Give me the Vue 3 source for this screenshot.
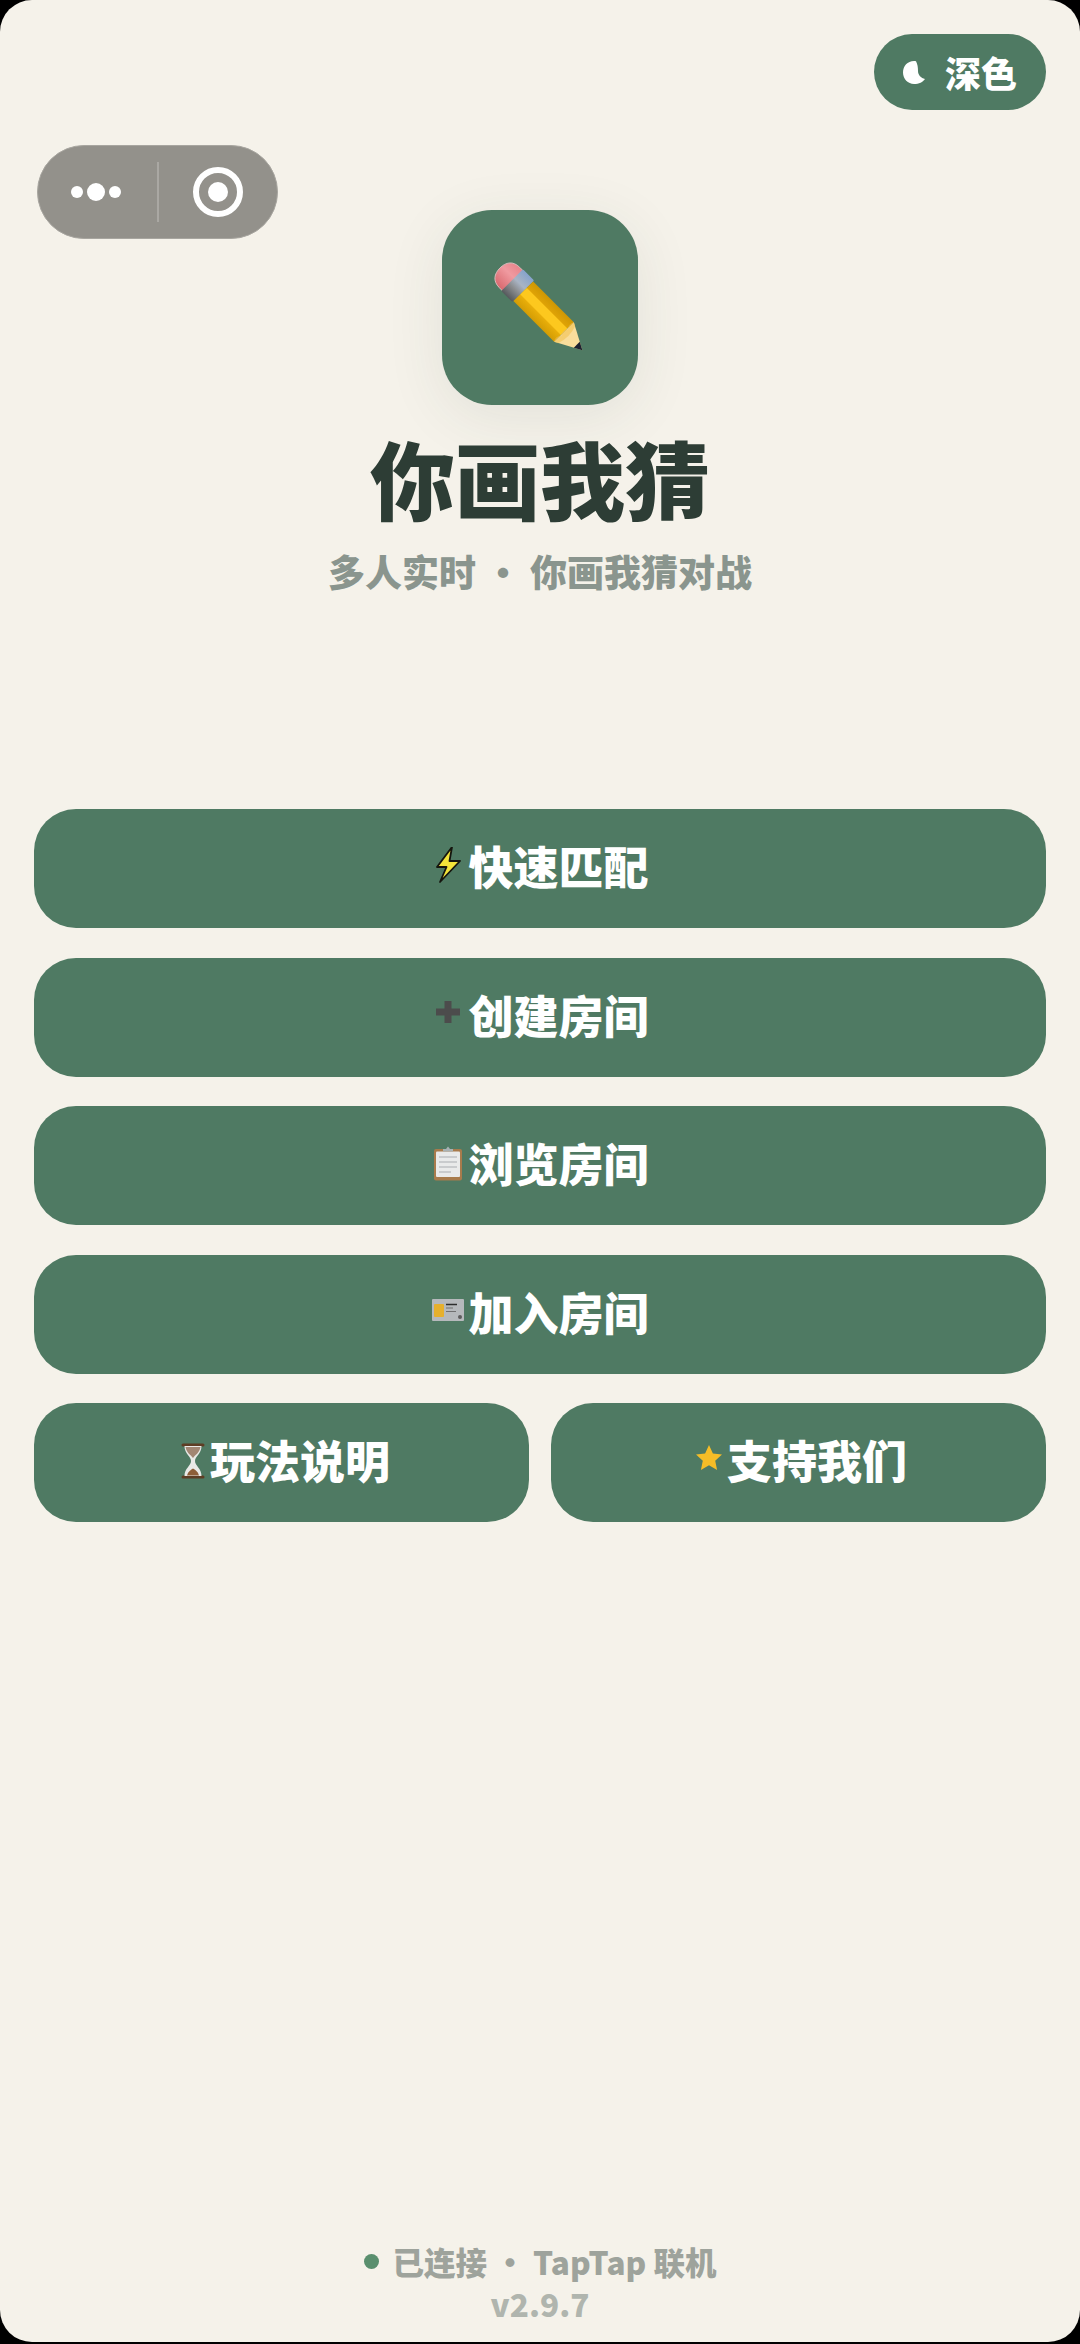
<template>
  <div class="page">
    <button class="theme">
      <svg class="moon" viewBox="0 0 22 23"><path d="M11 0C4.500 0 0 5 0 11.500S5 23 11 23c5 0 9-2 11-5-4-1-7-4-7-8 0-4-.5-7-2-9.800-.7-.1-1.300-.2-2-.2z" fill="#fff"/></svg>
      <span>深色</span>
    </button>
    <div class="capsule">
      <div class="dots"><i class="sm"></i><i class="lg"></i><i class="sm"></i></div>
      <div class="divider"></div>
      <div class="target"><i></i></div>
    </div>

    <header class="hero">
      <div class="logo">
        <svg class="pencil" viewBox="0 0 140 140">
          <defs>
            <linearGradient id="body" x1="0" y1="0" x2="1" y2="0">
              <stop offset="0" stop-color="#d39c04"/><stop offset=".33" stop-color="#e8ae0a"/><stop offset=".36" stop-color="#fdc81e"/><stop offset=".66" stop-color="#fdc81e"/><stop offset=".69" stop-color="#dfa306"/><stop offset="1" stop-color="#cf9703"/>
            </linearGradient>
            <linearGradient id="ferr" x1="0" y1="0" x2="1" y2="0">
              <stop offset="0" stop-color="#55595c"/><stop offset=".35" stop-color="#8b8d90"/><stop offset=".6" stop-color="#a9b4c4"/><stop offset="1" stop-color="#86a3cc"/>
            </linearGradient>
            <linearGradient id="eraser" x1="0" y1="0" x2="1" y2="0">
              <stop offset="0" stop-color="#d9696f"/><stop offset=".6" stop-color="#f09aa0"/><stop offset="1" stop-color="#e9858c"/>
            </linearGradient>
          </defs>
          <g transform="rotate(-45 70 70)">
            <path d="M54.500 28V22C54.500 12 61 7.500 70 7.500S85.500 12 85.500 22V28z" fill="url(#eraser)" stroke="#d8bcbc" stroke-width="1"/>
            <rect x="53.500" y="26" width="33" height="17" rx="1.500" fill="url(#ferr)"/>
            <rect x="55" y="43" width="30" height="62" fill="url(#body)"/>
            <path d="M55 105 70 133 85 105z" fill="#f9dd9c"/>
            <path d="M55 105q5-4 10 1q5-5 10 0q5-4 10-1l-2 4q-13 5-26 0z" fill="#f3bf4d" opacity=".55"/>
            <path d="M65.500 124.500h9L70 133z" fill="#1c2130"/>
          </g>
        </svg>
      </div>
      <h1>你画我猜</h1>
      <p>多人实时 · 你画我猜对战</p>
    </header>

    <main class="actions">
      <button class="btn">
        <svg class="ico" viewBox="0 0 33 40"><path d="M21 0 6 20h9.500L9 35 29 14H18.500z" fill="#f3e43a" stroke="#15150e" stroke-width="1.800" stroke-linejoin="round"/></svg>
        <span>快速匹配</span>
      </button>
      <button class="btn">
        <svg class="ico" viewBox="0 0 33 40"><path d="M13.500 6h7v7.500H29v7h-8.500V28h-7v-7.500H5v-7h8.500z" fill="#4c4c4c"/></svg>
        <span>创建房间</span>
      </button>
      <button class="btn">
        <svg class="ico" viewBox="0 0 33 40"><rect x="3" y="5" width="28" height="31.500" rx="2" fill="#a87b4c"/><rect x="5" y="7.500" width="24" height="25.500" rx="1" fill="#e9eaea"/><path d="M8 13h18M8 18h18M8 23h18M8 28h12" stroke="#c9cbcd" stroke-width="1.800"/><path d="M12 7.500V5h3l2-2.500L19 5h3v2.500z" fill="#a9b2b4"/></svg>
        <span>浏览房间</span>
      </button>
      <button class="btn">
        <svg class="ico" viewBox="0 0 33 40"><rect x="1" y="7" width="32" height="22" rx="1" fill="#b6b9bc"/><rect x="3" y="12" width="10" height="13" rx="1" fill="#e6b02c"/><path d="M15 12.500h11" stroke="#2e2e2e" stroke-width="1.500"/><path d="M15 16h7M15 19.500h10" stroke="#707070" stroke-width="1"/><circle cx="29" cy="25" r="2" fill="#5d5d5d"/></svg>
        <span>加入房间</span>
      </button>
      <div class="row">
        <button class="btn">
          <svg class="ico" viewBox="0 0 33 40"><path d="M10 4h20M10 36h20" stroke="#5e3d24" stroke-width="3" stroke-linecap="round"/><path d="M11.500 5h17c0 8-6.500 10-6.500 15s6.500 7 6.500 15h-17c0-8 6.500-10 6.500-15S11.500 13 11.500 5z" fill="#e9e9e7"/><path d="M12.500 6h15c-1 6-5.500 8-7.500 11-2-3-6.500-5-7.500-11z" fill="#a28673"/><path d="M14 34.500c1-4 4-6 6-7 2 1 5 3 6 7z" fill="#8d5e38"/></svg>
          <span>玩法说明</span>
        </button>
        <button class="btn">
          <svg class="ico" viewBox="0 0 33 40"><path d="M19 4l3.900 8.400 9.100 1-6.800 6.300 1.900 9.300L19 24.300l-8.100 4.700 1.900-9.300L6 13.400l9.100-1z" fill="#f6bd27"/></svg>
          <span>支持我们</span>
        </button>
      </div>
    </main>

    <footer class="foot">
      <div class="status"><i class="dot"></i><span>已连接 · TapTap 联机</span></div>
      <div class="ver">v2.9.7</div>
    </footer>
  </div>
</template>

<script setup>
</script>

<style>
html, body { margin: 0; background: #000; }
</style>

<style scoped>
.page {
  position: relative;
  box-sizing: border-box;
  width: 1080px;
  height: 2342px;
  background: #f5f2ea;
  border-radius: 32px;
  overflow: hidden;
  display: flex;
  flex-direction: column;
  font-family: "Noto Sans CJK SC", "Noto Sans", sans-serif;
}
button { font-family: inherit; border: none; padding: 0; color: #fff; }
.theme {
  position: absolute;
  top: 34px;
  right: 34px;
  width: 172px;
  height: 76px;
  border-radius: 38px;
  background: #4f7a63;
  display: flex;
  align-items: center;
  justify-content: center;
  gap: 20px;
  font-size: 36px;
  font-weight: 900;
}
.moon { width: 22px; height: 23px; }
.capsule {
  position: absolute;
  top: 145px;
  left: 37px;
  width: 241px;
  height: 94px;
  border-radius: 47px;
  background: #93918b;
  display: flex;
  align-items: center;
  box-sizing: border-box;
  border: 1px solid #a8a6a0;
}
.dots { width: 116px; display: flex; align-items: center; justify-content: center; gap: 4px; margin-right: 3px; }
.dots i { display: block; border-radius: 50%; background: #fff; }
.dots .sm { width: 12px; height: 12px; }
.dots .lg { width: 18px; height: 18px; }
.divider { width: 2px; height: 60px; background: #aaa8a3; }
.target {
  flex: 1;
  display: flex;
  align-items: center;
  justify-content: center;
}
.target i {
  box-sizing: border-box;
  width: 50px;
  height: 50px;
  border: 6px solid #fff;
  border-radius: 50%;
  display: flex;
  align-items: center;
  justify-content: center;
}
.target i::after {
  content: "";
  width: 20px;
  height: 20px;
  border-radius: 50%;
  background: #fff;
}
.hero {
  display: flex;
  flex-direction: column;
  align-items: center;
  padding-top: 210px;
}
.logo {
  width: 196px;
  height: 195px;
  border-radius: 50px;
  background: #4f7a63;
  box-shadow: 0 12px 60px rgba(45, 61, 53, 0.09);
  display: flex;
  align-items: center;
  justify-content: center;
}
.pencil { width: 130px; height: 130px; margin: 3px 0 0 2px; }
h1 {
  margin: 22px 0 0;
  font-size: 85px;
  line-height: 100px;
  font-weight: 900;
  color: #2d3d35;
}
.hero p {
  margin: 19px 0 0;
  font-size: 37px;
  line-height: 50px;
  font-weight: 900;
  color: #8a958e;
}
.actions {
  margin-top: 213px;
  padding: 0 34px;
  display: flex;
  flex-direction: column;
  gap: 29.500px;
}
.btn {
  height: 119px;
  border-radius: 42px;
  background: #4f7a63;
  display: flex;
  align-items: center;
  justify-content: center;
  font-size: 45px;
  font-weight: 900;
  gap: 4px;
}
.btn span { padding-bottom: 6px; }
.row { display: grid; grid-template-columns: 1fr 1fr; gap: 22px; }
.ico { width: 33px; height: 40px; margin-top: -4px; flex: none; }
.foot {
  margin-top: auto;
  padding-bottom: 18px;
  display: flex;
  flex-direction: column;
  align-items: center;
  font-weight: 900;
  font-size: 31.500px;
  line-height: 42px;
}
.status { color: #9ea39c; display: flex; align-items: center; gap: 14px; }
.dot { width: 15px; height: 15px; border-radius: 50%; background: #5a8f6e; }
.ver { color: #b0b5ae; }
</style>
